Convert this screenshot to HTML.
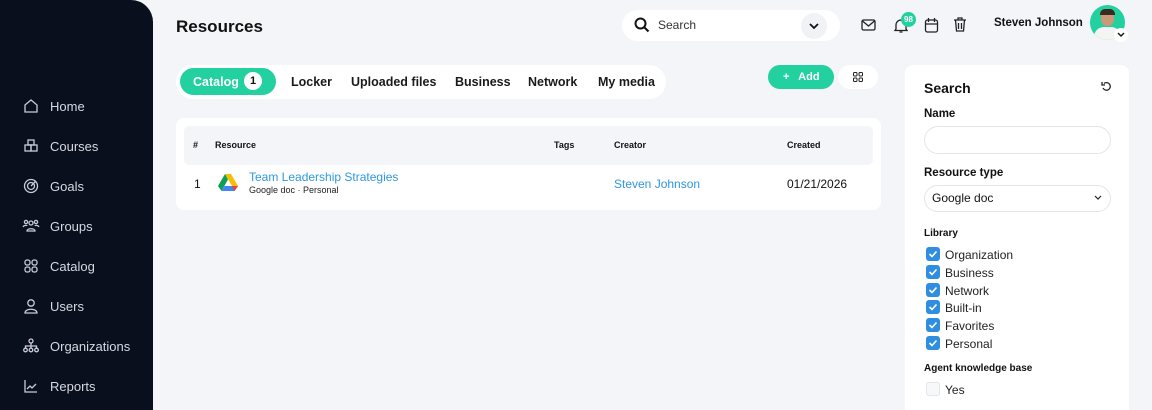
<!DOCTYPE html>
<html style="width:1152px;height:410px;overflow:hidden"><head><meta charset="utf-8"><style>
*{box-sizing:border-box;margin:0;padding:0}
body{width:1152px;height:410px;overflow:hidden;background:#f3f5f9;font-family:"Liberation Sans",sans-serif;position:relative;color:#111}
.abs{position:absolute}
.side{left:0;top:0;width:153px;height:410px;background:#0a0f1e;border-top-right-radius:22px}
.nav{position:absolute;left:22px;display:flex;align-items:center;color:#d6d9e2;font-size:13px}
.nav svg{width:18px;height:18px;margin-right:10px;stroke:#c9ccd6;fill:none;stroke-width:1.3}
.tab{position:absolute;top:75px;font-size:12.5px;font-weight:bold;color:#1a1a1a}
.th{position:absolute;top:140px;font-size:9px;font-weight:bold}
.lbl{position:absolute;left:924px;font-weight:bold;font-size:11.5px}
.cb{position:absolute;left:926px;width:14px;height:14px;border-radius:3px;background:#2f8ee0}
.cb svg{position:absolute;left:2px;top:2px}
.cbt{position:absolute;left:945px;font-size:12px;color:#222}
</style></head><body>
<div class="abs side"></div>
<div class="nav" style="top:97px"><svg viewBox="0 0 18 18"><path d="M3 8L9 3l6 5v7H3z"/></svg>Home</div>
<div class="nav" style="top:137px"><svg viewBox="0 0 18 18"><rect x="6" y="3" width="6" height="5"/><rect x="3" y="8" width="6" height="6"/><rect x="9" y="8" width="6" height="6"/></svg>Courses</div>
<div class="nav" style="top:177px"><svg viewBox="0 0 18 18"><circle cx="9" cy="9" r="6.5"/><circle cx="9" cy="9" r="3.5"/><path d="M9 9l5-5"/></svg>Goals</div>
<div class="nav" style="top:217px"><svg viewBox="0 0 18 18"><circle cx="9" cy="6" r="2"/><circle cx="4" cy="5" r="1.6"/><circle cx="14" cy="5" r="1.6"/><path d="M5 14c0-3 8-3 8 0zM1 10c1-2 4-2 4-1M17 10c-1-2-4-2-4-1"/></svg>Groups</div>
<div class="nav" style="top:257px"><svg viewBox="0 0 18 18"><rect x="3" y="3" width="5" height="5" rx="2"/><rect x="10" y="3" width="5" height="5" rx="2"/><rect x="3" y="10" width="5" height="5" rx="2"/><rect x="10" y="10" width="5" height="5" rx="2"/></svg>Catalog</div>
<div class="nav" style="top:297px"><svg viewBox="0 0 18 18"><circle cx="9" cy="6" r="3.2"/><path d="M3 16c0-5 12-5 12 0z"/></svg>Users</div>
<div class="nav" style="top:337px"><svg viewBox="0 0 18 18"><circle cx="9" cy="4" r="2"/><circle cx="3.5" cy="13" r="1.8"/><circle cx="9" cy="13" r="1.8"/><circle cx="14.5" cy="13" r="1.8"/><path d="M9 6v5M3.5 11V9h11v2"/></svg>Organizations</div>
<div class="nav" style="top:377px"><svg viewBox="0 0 18 18"><path d="M3 3v12h12M5 12l3-3 2 2 4-4"/></svg>Reports</div>

<div class="abs" style="left:176px;top:17px;font-size:17px;font-weight:bold">Resources</div>

<div class="abs" style="left:622px;top:10px;width:218px;height:31px;background:#fff;border-radius:16px"></div>
<svg class="abs" style="left:634px;top:17px" width="16" height="16" viewBox="0 0 16 16"><circle cx="6.5" cy="6.5" r="5" fill="none" stroke="#111" stroke-width="2"/><path d="M10 10l4.5 4.5" stroke="#111" stroke-width="2"/></svg>
<div class="abs" style="left:658px;top:18px;font-size:12px;color:#333">Search</div>
<div class="abs" style="left:801px;top:13px;width:26px;height:26px;border-radius:13px;background:#f1f2f5"></div>
<svg class="abs" style="left:808px;top:20px" width="12" height="12"><path d="M2 4l4 4 4-4" fill="none" stroke="#111" stroke-width="1.8"/></svg>
<svg class="abs" style="left:861px;top:18px" width="16" height="14"><rect x="1" y="2" width="13" height="10" rx="1.5" fill="none" stroke="#222" stroke-width="1.3"/><path d="M1.5 3l6 5 6-5" fill="none" stroke="#222" stroke-width="1.3"/></svg>
<svg class="abs" style="left:893px;top:17px" width="16" height="17"><path d="M3 12V8a5 5 0 0 1 10 0v4l1 1.5H2z M6.5 15h3" fill="none" stroke="#222" stroke-width="1.3"/></svg>
<div class="abs" style="left:901px;top:12px;width:15px;height:15px;border-radius:8px;background:#22d0a0;color:#fff;font-size:8px;font-weight:bold;text-align:center;line-height:15px">98</div>
<svg class="abs" style="left:924px;top:17px" width="15" height="16"><rect x="1.5" y="3" width="12" height="12" rx="2" fill="none" stroke="#222" stroke-width="1.3"/><path d="M4.5 1v4M10.5 1v4M1.5 7h12" stroke="#222" stroke-width="1.3"/></svg>
<svg class="abs" style="left:953px;top:16px" width="14" height="17"><path d="M1 4h12M5 4V2h4v2M2.5 4l1 11h7l1-11M5.5 7v6M8.5 7v6" fill="none" stroke="#222" stroke-width="1.3"/></svg>
<div class="abs" style="left:994px;top:17px;font-size:11.5px;font-weight:bold">Steven Johnson</div>
<div class="abs" style="left:1090px;top:5px;width:35px;height:35px;border-radius:18px;background:#22d0a0;overflow:hidden">
<div style="position:absolute;left:11px;top:6px;width:13px;height:15px;border-radius:6px;background:#c99a7a"></div>
<div style="position:absolute;left:10px;top:4px;width:15px;height:6px;border-radius:5px 5px 0 0;background:#3a2a20"></div>
<div style="position:absolute;left:4px;top:22px;width:27px;height:16px;border-radius:10px 10px 0 0;background:#f4f4f2"></div></div>
<div class="abs" style="left:1114px;top:28px;width:14px;height:14px;border-radius:7px;background:#fff"></div>
<svg class="abs" style="left:1117px;top:32px" width="8" height="6"><path d="M1 1l3 3 3-3" fill="none" stroke="#111" stroke-width="1.4"/></svg>

<div class="abs" style="left:176px;top:65px;width:490px;height:34px;background:#fff;border-radius:17px"></div>
<div class="abs" style="left:180px;top:68px;width:96px;height:27px;background:#22d0a0;border-radius:14px"></div>
<div class="tab" style="left:193px;color:#fff">Catalog</div>
<div class="abs" style="left:244px;top:72px;width:18px;height:18px;border-radius:9px;background:#fff;font-size:11px;font-weight:bold;text-align:center;line-height:18px">1</div>
<div class="tab" style="left:291px">Locker</div>
<div class="tab" style="left:351px">Uploaded files</div>
<div class="tab" style="left:455px">Business</div>
<div class="tab" style="left:528px">Network</div>
<div class="tab" style="left:598px">My media</div>

<div class="abs" style="left:768px;top:65px;width:66px;height:24px;background:#22d0a0;border-radius:12px;color:#fff;font-size:11px;font-weight:bold;line-height:24px;padding-left:15px">+&nbsp;&nbsp; Add</div>
<div class="abs" style="left:838px;top:65px;width:40px;height:24px;background:#fff;border-radius:12px"></div>
<svg class="abs" style="left:853px;top:72px" width="10" height="10"><g fill="none" stroke="#222" stroke-width="1"><rect x=".5" y=".5" width="3.5" height="3.5" rx="1"/><rect x="6" y=".5" width="3.5" height="3.5" rx="1"/><rect x=".5" y="6" width="3.5" height="3.5" rx="1"/><rect x="6" y="6" width="3.5" height="3.5" rx="1"/></g></svg>

<div class="abs" style="left:176px;top:118px;width:705px;height:92px;background:#fff;border-radius:8px"></div>
<div class="abs" style="left:184px;top:126px;width:689px;height:39px;background:#f3f5f9;border-radius:5px"></div>
<div class="th" style="left:193px">#</div>
<div class="th" style="left:215px">Resource</div>
<div class="th" style="left:554px">Tags</div>
<div class="th" style="left:614px">Creator</div>
<div class="th" style="left:787px">Created</div>
<div class="abs" style="left:194px;top:177px;font-size:12px">1</div>
<svg class="abs" style="left:218px;top:174px" width="20" height="18" viewBox="0 0 20 18"><path d="M7 0h6l7 12h-6z" fill="#fbbc04"/><path d="M7 0l3 5.5L3.5 17 0 12z" fill="#0f9d58"/><path d="M3.5 17h13l3.5-5H6.5z" fill="#4285f4"/><path d="M16.5 17L20 12h-6z" fill="#ea4335"/></svg>
<div class="abs" style="left:249px;top:170px;font-size:12px;color:#2e98e0">Team Leadership Strategies</div>
<div class="abs" style="left:249px;top:185px;font-size:9px;color:#222">Google doc · Personal</div>
<div class="abs" style="left:614px;top:177px;font-size:12px;color:#2e98e0">Steven Johnson</div>
<div class="abs" style="left:787px;top:177px;font-size:12px;color:#111">01/21/2026</div>

<div class="abs" style="left:905px;top:65px;width:224px;height:345px;background:#fff;border-radius:8px 8px 0 0"></div>
<div class="abs" style="left:924px;top:80px;font-size:14px;font-weight:bold">Search</div>
<svg class="abs" style="left:1101px;top:81px" width="10" height="10"><path d="M3 2.5A3.8 3.8 0 1 1 2 7" fill="none" stroke="#222" stroke-width="1.3"/><path d="M1 1v3h3" fill="none" stroke="#222" stroke-width="1.3"/></svg>
<div class="lbl" style="top:108px">Name</div>
<div class="abs" style="left:924px;top:126px;width:187px;height:28px;border:1px solid #e2e5ec;border-radius:14px"></div>
<div class="lbl" style="top:167px">Resource type</div>
<div class="abs" style="left:924px;top:185px;width:187px;height:27px;border:1px solid #e2e5ec;border-radius:14px;font-size:12px;line-height:25px;padding-left:7px">Google doc</div>
<svg class="abs" style="left:1094px;top:195px" width="8" height="6"><path d="M1 1l3 3 3-3" fill="none" stroke="#222" stroke-width="1.2"/></svg>
<div class="lbl" style="top:228px;font-size:10px">Library</div>
<div class="cb" style="top:247px"><svg width="10" height="10"><path d="M1.5 5l2.5 2.5 4.5-5" fill="none" stroke="#fff" stroke-width="1.6"/></svg></div><div class="cbt" style="top:248px">Organization</div>
<div class="cb" style="top:265px"><svg width="10" height="10"><path d="M1.5 5l2.5 2.5 4.5-5" fill="none" stroke="#fff" stroke-width="1.6"/></svg></div><div class="cbt" style="top:266px">Business</div>
<div class="cb" style="top:283px"><svg width="10" height="10"><path d="M1.5 5l2.5 2.5 4.5-5" fill="none" stroke="#fff" stroke-width="1.6"/></svg></div><div class="cbt" style="top:284px">Network</div>
<div class="cb" style="top:300px"><svg width="10" height="10"><path d="M1.5 5l2.5 2.5 4.5-5" fill="none" stroke="#fff" stroke-width="1.6"/></svg></div><div class="cbt" style="top:301px">Built-in</div>
<div class="cb" style="top:318px"><svg width="10" height="10"><path d="M1.5 5l2.5 2.5 4.5-5" fill="none" stroke="#fff" stroke-width="1.6"/></svg></div><div class="cbt" style="top:319px">Favorites</div>
<div class="cb" style="top:336px"><svg width="10" height="10"><path d="M1.5 5l2.5 2.5 4.5-5" fill="none" stroke="#fff" stroke-width="1.6"/></svg></div><div class="cbt" style="top:337px">Personal</div>
<div class="lbl" style="top:363px;font-size:10px">Agent knowledge base</div>
<div class="abs" style="left:926px;top:382px;width:14px;height:14px;border:1px solid #e2e5ec;border-radius:3px;background:#f7f8fa"></div>
<div class="cbt" style="top:383px">Yes</div>
</body></html>
